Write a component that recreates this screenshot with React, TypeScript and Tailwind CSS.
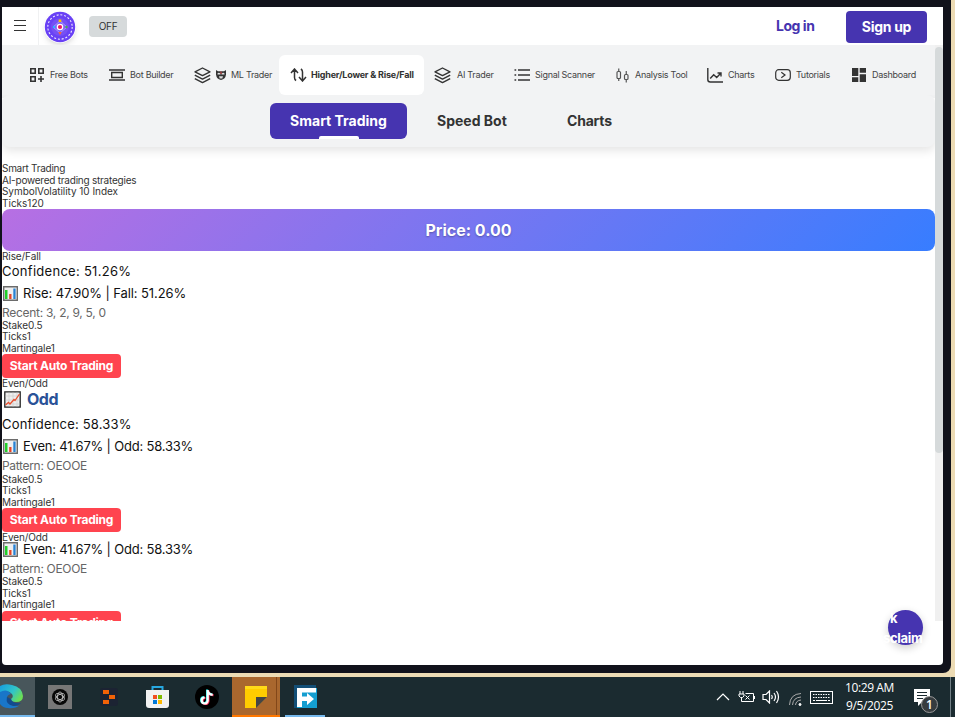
import type { ReactNode } from 'react';

const stroke = { fill: 'none', stroke: '#333333', strokeWidth: 1.4 };

const GridAddIcon = () => (
  <svg width="14" height="14" viewBox="0 0 14 14" {...stroke} strokeWidth="1.600">
    <path d="M.8 .8h4.400v4.400H.8zM8.800 .8h4.400v4.400H8.800zM.8 8.800h4.400v4.400H.8zM11 8v6M8 11h6" />
  </svg>
);
const BuilderIcon = () => (
  <svg width="16" height="12" viewBox="0 0 16 12" {...stroke}>
    <path d="M0 1h16M0 11h16M2.700 3.500h10.600v5H2.700z" />
  </svg>
);
const LayersIcon = () => (
  <svg width="17" height="17" viewBox="0 0 17 17" {...stroke} strokeLinejoin="round" className="-ml-px">
    <path d="M8.500 1 16 4.800 8.500 8.600 1 4.800zM.8 8.100l7.700 4 7.700-4M.8 11.600l7.700 4 7.700-4" />
  </svg>
);
const ArrowsIcon = () => (
  <svg width="17" height="14" viewBox="0 0 17 14" {...stroke} strokeWidth="1.500">
    <path d="M1 5l3.500-4L8 5M4.500 1v8.500q0 2 1.600 3M9 9l3.500 4L16 9M12.500 13V4q0-2-1.600-3" />
  </svg>
);
const ListIcon = () => (
  <svg width="16" height="12" viewBox="0 0 16 12" {...stroke}>
    <path d="M4 1h12M4 6h12M4 11h12M.5 1h1.700M.5 6h1.700M.5 11h1.700" />
  </svg>
);
const CandlesIcon = () => (
  <svg width="13" height="15" viewBox="0 0 13 15" fill="none" stroke="#555" strokeWidth="1.200" className="ml-px">
    <rect x="1" y="3.500" width="3.500" height="7" rx="1" />
    <rect x="8.500" y="6.500" width="3.500" height="5" rx="1" />
    <path d="M2.750 .5v3M2.750 10.500v2.500M10.250 3v3.500M10.250 11.500v3" />
  </svg>
);
const ChartIcon = () => (
  <svg width="16" height="15" viewBox="0 0 16 15" {...stroke}>
    <path d="M.8 0v11.500q0 2.500 2.500 2.500H16M3.200 10.500l3.500-3.800 3 2.800 4-4.300M10.500 5h3.500v3.600" />
  </svg>
);
const TutorialIcon = () => (
  <svg width="16" height="12" viewBox="0 0 16 12" {...stroke} strokeWidth="1.200">
    <rect x=".7" y=".7" width="14.600" height="10.600" rx="3" />
    <path d="M6.300 3.300 10 6 6.300 8.700" />
  </svg>
);
const DashboardIcon = () => (
  <svg width="14" height="14" viewBox="0 0 14 14" fill="#333">
    <path d="M0 0h6.300v8H0zM7.700 0H14v4.800H7.700zM0 9.300h6.300V14H0zM7.700 6.200H14V14H7.700z" />
  </svg>
);
const MaskIcon = () => (
  <svg width="10" height="10" viewBox="0 0 10 10">
    <path d="M0 0l2 1.300h6L10 0v4.500Q9.500 9 5 10 .5 9 0 4.500z" fill="#333" />
    <path d="M1.500 3.500q1-1.500 3 0v1h-3zM8.500 3.500q-1-1.500-3 0v1h3zM3 6.300h4L6.300 8.500H3.700z" fill="#ddd" />
    <path d="M4.500 1.500h1V4h-1z" fill="#d44" />
  </svg>
);

const BarsEmoji = () => (
  <svg width="15" height="15" viewBox="0 0 15 15" className="ml-px shrink-0">
    <path d="M.7 .7h13.600v13.600H.7z" fill="#eeeeef" stroke="#6b6b6b" strokeWidth="1.400" />
    <path d="M2 4h2.500v9H2z" fill="#20ce29" />
    <path d="M6.200 8h2.300v5H6.200z" fill="#e74224" />
    <path d="M10.300 2.500h2.300V13h-2.300z" fill="#2782d4" />
  </svg>
);
const TrendEmoji = () => (
  <svg width="17" height="17" viewBox="0 0 17 17" className="ml-[2px] shrink-0">
    <path d="M.8 .8h15.400v15.400H.8z" fill="#eee" stroke="#222" strokeWidth="1.300" />
    <path d="M5 1.500v14M9 1.500v14M13 1.500v14M1.500 5h14M1.500 9h14M1.500 13h14" stroke="#ccc" strokeWidth=".7" />
    <path d="M1.500 14l3-2.500 1.500 1.500 4-4.500 1 1L15.500 3" fill="none" stroke="#e8502e" strokeWidth="1.300" />
  </svg>
);

function NavItem({ icon, box, gap, label, mask }: { icon: ReactNode; box: string; gap: string; label: string; mask?: boolean }) {
  return (
    <div className={`flex h-10 shrink-0 items-center text-[9px] tracking-[-0.280px] text-[#444] ${box} ${gap}`}>
      {icon}
      {mask && <MaskIcon />}
      <span className="whitespace-nowrap">{label}</span>
    </div>
  );
}

const Small = ({ children, track = 'tracking-[-0.100px]' }: { children: ReactNode; track?: string }) => (
  <div className={`text-[10px] leading-[11.500px] text-[#333] ${track}`}>{children}</div>
);

function Settings() {
  return (
    <>
      <div className="h-[35px] pt-[0.500px] text-[10px] leading-[11.500px] tracking-[-0.100px] text-[#333]">
        <div>Stake0.5</div>
        <div>Ticks1</div>
        <div>Martingale1</div>
      </div>
      <button className="flex h-6 w-[119px] items-center justify-center rounded-[4px] bg-[#ff444f] text-[12px] font-bold tracking-[-0.230px] whitespace-nowrap text-white">
        Start Auto Trading
      </button>
    </>
  );
}

function Stat({ children, box }: { children: ReactNode; box: string }) {
  return <div className={`flex items-center gap-1 text-[13px] text-[#111] ${box}`}>{children}</div>;
}

function Logo() {
  return (
    <svg width="32" height="32" viewBox="0 0 32 32" className="rounded-full shadow-md">
      <circle cx="16" cy="16" r="15.200" fill="#6941f5" />
      <circle cx="16" cy="16" r="12.200" fill="none" stroke="#eee8ff" strokeWidth="1.100" strokeDasharray="2 1.833" />
      <circle cx="16" cy="16" r="9" fill="#7650f4" />
      <path d="M9 16l7-6 7 6-7 6z" fill="#7f60fb" stroke="#b2a5ff" strokeWidth=".8" />
      <circle cx="16" cy="16" r="3.300" fill="#fff" />
      <circle cx="16" cy="16" r="2.100" fill="#ee1769" />
      <path d="M14.700 8.500h2.600v2.600h-2.600z" fill="#ffc400" />
      <path d="M14.300 21h3.400L16 24z" fill="#ff6534" />
      <circle cx="10" cy="16" r="1.200" fill="#2cb6ff" />
      <circle cx="22.500" cy="16" r="1.200" fill="#4caf50" />
    </svg>
  );
}

function Taskbar() {
  return (
    <footer className="flex h-10 bg-[#1b2b30] font-['Open_Sans','Noto_Sans',sans-serif] text-white">
      <div className="flex w-[35px] items-center overflow-hidden border-b-2 border-[#76b9ed] bg-[#48565b]">
        <svg width="24" height="25" viewBox="0 0 24 25">
          <defs>
            <linearGradient id="edge" x1="0" y1="0" x2="1" y2=".6"><stop stopColor="#169ee1" /><stop offset=".6" stopColor="#31c4c9" /><stop offset="1" stopColor="#6bdf55" /></linearGradient>
          </defs>
          <path d="M0 2Q5-1 12 1q10 2 11 11 0 6-7 6-5 0-5-3 3-2 1-5-4-5-12-1z" fill="url(#edge)" />
          <path d="M0 8q7-4 11 2-5 1-4 6 1 6 10 6 2 0 3-1-5 4-12 3-5 0-8-4z" fill="#1976c8" />
          <path d="M7 13q-2 8 7 9 4 0 7-3-9 1-10-4z" fill="#124b90" />
        </svg>
      </div>
      <div className="flex w-[50px] items-center justify-center">
        <div className="flex size-6 items-center justify-center bg-[#777]">
          <svg width="16" height="16" viewBox="0 0 16 16">
            <circle cx="8" cy="8" r="8" fill="#080808" />
            <g fill="none" stroke="#ddd" strokeWidth=".7">
              <ellipse cx="8" cy="8" rx="2.500" ry="5" /><ellipse cx="8" cy="8" rx="2.500" ry="5" transform="rotate(60 8 8)" /><ellipse cx="8" cy="8" rx="2.500" ry="5" transform="rotate(120 8 8)" />
            </g>
          </svg>
        </div>
      </div>
      <div className="flex w-[48px] items-center justify-center">
        <svg width="18" height="18" viewBox="0 0 18 18"><rect width="18" height="18" rx="3" fill="#1c2333" /><path d="M3 2h6v4H3zM9 7h6v4H9zM3 12h6v4H3z" fill="#f26207" /></svg>
      </div>
      <div className="flex w-[49px] items-center justify-center">
        <svg width="23" height="24" viewBox="0 0 23 24">
          <path d="M6.500 6V2h10v4" fill="none" stroke="#27a8e0" strokeWidth="2" />
          <path d="M0 5h23v15q0 3-3 3H3q-3 0-3-3z" fill="#f2f2f2" />
          <path d="M7 10h4v4H7z" fill="#f25022" /><path d="M12 10h4v4h-4z" fill="#7fba00" /><path d="M7 15h4v4H7z" fill="#0078d7" /><path d="M12 15h4v4h-4z" fill="#ffb900" />
        </svg>
      </div>
      <div className="flex w-[50px] items-center justify-center">
        <svg width="24" height="24" viewBox="0 0 24 24" fill="none" strokeWidth="2.200">
          <circle cx="12" cy="12" r="12" fill="#000" />
          <path d="M12.700 5v10.500a3 3 0 1 1-3-3M12.700 6q1 3.500 5 3.700" stroke="#fe2c55" transform="translate(.8 .5)" />
          <path d="M12.700 5v10.500a3 3 0 1 1-3-3M12.700 6q1 3.500 5 3.700" stroke="#25f4ee" transform="translate(-.6 -.4)" />
          <path d="M12.700 5v10.500a3 3 0 1 1-3-3M12.700 6q1 3.500 5 3.700" stroke="#fff" />
        </svg>
      </div>
      <div className="flex w-12 border-b-2 border-[#ff7800] bg-[#a9672e]">
        <div className="flex w-[45px] items-center justify-center border-r border-[#824719] pt-[2px] pl-1">
          <svg width="22" height="22" viewBox="0 0 22 22"><path d="M0 0h22v11L11 22H0z" fill="#fc0" /><path d="M0 0h22v3H0z" fill="#ffda18" /><path d="M22 11v11H11z" fill="#a9672e" /><path d="M11 11h11L11 22z" fill="#454545" /></svg>
        </div>
      </div>
      <div className="ml-[5px] flex w-10 items-center justify-center border-b-2 border-[#76b9ed]">
        <svg width="23" height="23" viewBox="0 0 23 23"><path d="M0 0h22v23H0z" fill="#134f77" /><path d="M3 3h20v20H3z" fill="#149ed0" /><path d="M3 3h19v4.500H8v4h5V8l7 6-7 6v-4H8v6H3z" fill="#fff" /></svg>
      </div>
      <div className="ml-auto flex items-center">
        <svg width="14" height="8" viewBox="0 0 14 8" fill="none" stroke="#fff" strokeWidth="1.200"><path d="M1 7l6-6 6 6" /></svg>
        <svg className="ml-2" width="17" height="12" viewBox="0 0 17 12" fill="none" stroke="#fff"><path d="M2 0v3M5 0v3M1 3h5v2L4.500 6.500h-2L1 5zM3.500 7v3.500H15.500v-8H7.500M16.500 5v3M7.500 4.500l4 4M11.500 4.500l-4 4" /></svg>
        <svg className="ml-[7px]" width="18" height="14" viewBox="0 0 18 14" fill="none" stroke="#fff" strokeWidth="1.200"><path d="M1 4.500h3L7.500 1v12L4 9.500H1zM9.500 5q1.500 2 0 4M12 3q3 4 0 8M14.500 1q4 6 0 12" /></svg>
        <svg className="mt-1 ml-[9px]" width="13" height="13" viewBox="0 0 13 13" fill="none" stroke="#aaa"><path d="M.5 12Q1 1 12 .500M3.500 12Q4 4.500 12 4M6.500 12Q7 7.500 12 7" /><circle cx="11" cy="11.500" r="1" fill="#fff" stroke="#fff" /></svg>
        <svg className="ml-[8px]" width="23" height="13" viewBox="0 0 23 13" fill="none" stroke="#fff"><rect x=".5" y=".5" width="22" height="12" /><path d="M3 3.500h17M3 6.500h17" strokeDasharray="1.500 1" /><path d="M3 9.500h2M6 9.500h11M18 9.500h2" /></svg>
        <div className="ml-2 w-[57px] text-center text-[12px] leading-[18px] tracking-[-0.400px] whitespace-nowrap">
          <div>10:29 AM</div>
          <div>9/5/2025</div>
        </div>
        <div className="relative ml-4 w-[37px] self-stretch border-r border-[#728086]">
          <svg className="mt-3" width="16" height="17" viewBox="0 0 16 17"><path d="M0 0h16v13H8l-4 4v-4H0z" fill="#fff" /><path d="M3 3.500h10M3 6.500h10M3 9.500h6" stroke="#1b2b30" /></svg>
          <span className="absolute top-[19px] left-[7px] flex size-[17px] items-center justify-center rounded-full border border-[#999] bg-[#363c3f] text-[12px] font-semibold">1</span>
        </div>
        <div className="w-[4px]" />
      </div>
    </footer>
  );
}

export default function App() {
  return (
    <div className="flex h-[717px] w-[955px] flex-col overflow-hidden bg-[#ecdbb4] font-[Inter,sans-serif]">
      <div className="mb-1 h-[673px] w-[951px] rounded-br-[8px] bg-[#11121b] pt-[7px] pl-[2px]">
        <main className="relative h-[658px] w-[941px] overflow-hidden rounded-b-[4px] bg-white">
          <header className="flex h-[38px] items-center">
            <div className="flex h-full w-[37px] items-center justify-center border-r border-[#f0f1f2] pb-[2px]">
              <svg width="12" height="11" viewBox="0 0 12 11" stroke="#333" strokeWidth="1"><path d="M0 .5h12M0 5.500h12M0 10.500h12" /></svg>
            </div>
            <div className="mt-[2px] ml-[5px]"><Logo /></div>
            <div className="mt-[1px] ml-[13px] flex h-[21px] w-[38px] items-center justify-center rounded-[4px] bg-[#d6dadb] text-[10px] tracking-[-0.300px] text-[#333]">OFF</div>
            <div className="ml-auto flex items-center pt-[2px] pr-4">
              <span className="w-[71px] pb-[3px] pl-px text-[14px] font-bold tracking-[-0.450px] text-[#4634b0]">Log in</span>
              <button className="h-8 w-[81px] rounded-[4px] bg-[#4634b0] pb-[2px] text-[14px] font-bold tracking-[-0.300px] text-white">Sign up</button>
            </div>
          </header>
          <div className="flex h-[576px]">
            <section className="h-full w-[933px] overflow-hidden">
              <nav className="flex h-[50px] bg-[#f2f3f4] pt-[10px] pl-7">
                <NavItem icon={<GridAddIcon />} box="w-[79px]" gap="gap-[6px]" label="Free Bots" />
                <NavItem icon={<BuilderIcon />} box="w-[86px]" gap="gap-[5px]" label="Bot Builder" />
                <NavItem icon={<LayersIcon />} box="w-[84px]" gap="gap-[5px]" label="ML Trader" mask />
                <div className="mr-[11px] flex h-10 w-[145px] shrink-0 items-center gap-1 rounded-[6px] bg-white pl-[11px] text-[9px] font-bold tracking-[-0.200px] text-[#333]">
                  <ArrowsIcon /><span className="whitespace-nowrap">Higher/Lower &amp; Rise/Fall</span>
                </div>
                <NavItem icon={<LayersIcon />} box="w-[79px]" gap="gap-[6px]" label="AI Trader" />
                <NavItem icon={<ListIcon />} box="w-[101px]" gap="gap-[5px]" label="Signal Scanner" />
                <NavItem icon={<CandlesIcon />} box="w-[92px]" gap="gap-[6px]" label="Analysis Tool" />
                <NavItem icon={<ChartIcon />} box="w-[68px]" gap="gap-[5px]" label="Charts" />
                <NavItem icon={<TutorialIcon />} box="w-[77px]" gap="gap-[5px]" label="Tutorials" />
                <NavItem icon={<DashboardIcon />} box="w-[80px]" gap="gap-[6px]" label="Dashboard" />
              </nav>
              <div className="bg-[linear-gradient(#f2f3f4_0_3px,transparent_3px)]">
                <div className="flex h-[52px] rounded-[8px] bg-[#f2f3f4] pt-2 pl-[268px] text-[14px] font-bold text-[#333] shadow-[0_4px_10px_rgba(0,0,0,0.1)] [clip-path:inset(0_0_-20px_0)]">
                  <div className="flex h-9 w-[137px] flex-col items-center rounded-[6px] bg-[#4634b0] text-white">
                    <span className="flex h-[33px] items-center pt-[2px]">Smart Trading</span>
                    <span className="h-[3px] w-10 rounded-t-[2px] bg-white" />
                  </div>
                  <span className="flex h-9 w-[130px] items-center pl-[30px] pb-px">Speed Bot</span>
                  <span className="flex h-9 items-center pl-[30px] pb-px tracking-[-0.200px]">Charts</span>
                </div>
              </div>
              <div className="pt-4">
                <Small track="tracking-[-0.280px]">Smart Trading</Small>
                <Small track="tracking-[-0.230px]">AI-powered trading strategies</Small>
                <Small track="tracking-[-0.050px]">SymbolVolatility 10 Index</Small>
                <Small track="tracking-normal">Ticks120</Small>
                <div className="flex h-[42px] items-center justify-center rounded-[8px] bg-[linear-gradient(135deg,#b76fe3,#377dff)] text-[16px] font-bold text-white [text-shadow:0_1px_2px_rgba(0,0,0,0.3)]">Price: 0.00</div>
                <Small>Rise/Fall</Small>
                <Stat box="h-[17.500px] tracking-[0.280px]">Confidence: 51.26%</Stat>
                <Stat box="h-[27px] tracking-[-0.100px]"><BarsEmoji /><span className="pl-px">Rise: 47.90% | Fall: 51.26%</span></Stat>
                <div className="h-3 text-[12px] leading-3 tracking-[-0.280px] text-[#666]">Recent: 3, 2, 9, 5, 0</div>
                <Settings />
                <Small>Even/Odd</Small>
                <div className="flex h-[20.500px] items-center gap-[6px] pb-px text-[16px] font-bold tracking-[-0.500px] text-[#2a5298]"><TrendEmoji />Odd</div>
                <Stat box="h-7 tracking-[0.180px] pt-px">Confidence: 58.33%</Stat>
                <Stat box="h-[17px] tracking-[-0.200px]"><BarsEmoji /><span className="pl-px">Even: 41.67% | Odd: 58.33%</span></Stat>
                <div className="mt-1 h-[14px] text-[12px] leading-[14px] tracking-[-0.320px] text-[#666]">Pattern: OEOOE</div>
                <Settings />
                <Small>Even/Odd</Small>
                <Stat box="h-[12.500px] tracking-[-0.200px]"><BarsEmoji /><span className="pl-px">Even: 41.67% | Odd: 58.33%</span></Stat>
                <div className="mt-[6px] h-[14px] text-[12px] leading-[14px] tracking-[-0.320px] text-[#666]">Pattern: OEOOE</div>
                <div className="-mt-[0.500px]"><Settings /></div>
              </div>
            </section>
            <aside className="h-full w-2 bg-[#f0f0f0]"><div className="mt-[2px] h-[406px] rounded-full bg-[#d6dadb]" /></aside>
          </div>
          <div className="absolute top-[603px] left-[886px] size-[35px] rounded-full bg-[#4634b0] text-[13px] leading-5 font-bold text-white shadow-[0_3px_8px_rgba(0,0,0,0.2)]">
            <div className="-mt-[2px] -ml-[5px] flex w-11 flex-col">
              <span className="pl-[7px]">k</span>
              <span className="tracking-[-0.300px]">sclaim</span>
            </div>
          </div>
        </main>
      </div>
      <Taskbar />
    </div>
  );
}
